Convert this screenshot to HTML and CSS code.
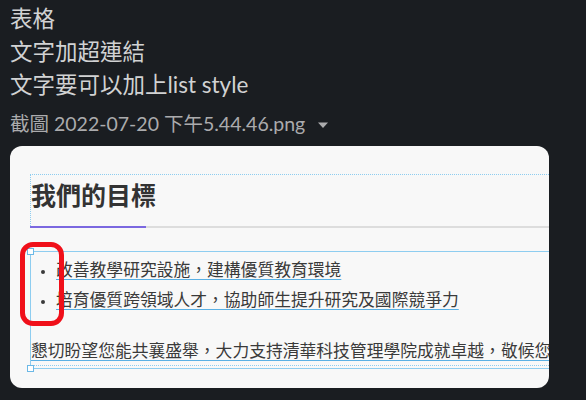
FILE: index.html
```html
<!DOCTYPE html>
<html lang="zh-Hant">
<head>
<meta charset="utf-8">
<link rel="stylesheet" href="styles.css">
</head>
<body>
<div class="msg">
  <p class="line">表格</p>
  <p class="line">文字加超連結</p>
  <p class="line">文字要可以加上list style</p>
  <div class="file">截圖 2022-07-20 下午5.44.46.png<svg class="caret" width="12" height="8" viewBox="0 0 12 8"><path d="M1 1.5h10L6 7z" fill="#ababad"/></svg></div>
  <div class="card">
    <div class="hbox">
      <h2 class="title">我們的目標</h2>
    </div>
    <div class="rule"><span class="rule-accent"></span></div>
    <div class="listbox">
      <span class="handle handle-top"></span>
      <span class="handle handle-bottom"></span>
      <ul class="goals">
        <li><span class="link">改善教學研究設施，建構優質教育環境</span></li>
        <li><span class="link">培育優質跨領域人才，協助師生提升研究及國際競爭力</span></li>
      </ul>
      <p class="para"><span class="link">懇切盼望您能共襄盛舉，大力支持清華科技管理學院成就卓越，敬候您</span></p>
    </div>
    <div class="marker"></div>
  </div>
</div>
</body>
</html>
```

FILE: styles.css
```css
html, body {
  margin: 0;
  padding: 0;
  background: #1a1d21;
}
.msg {
  padding: 2px 10px 0;
  font-family: Lato, "Noto Sans CJK TC", sans-serif;
}
.line {
  margin: 0;
  font-size: 22.5px;
  line-height: 33px;
  color: #d1d2d3;
}
.file {
  margin-top: 11px;
  font-size: 19.5px;
  line-height: 24px;
  color: #ababad;
  display: flex;
  align-items: center;
}
.caret {
  margin-left: 12px;
  margin-top: 2px;
}
.card {
  position: relative;
  margin-top: 10px;
  width: 539px;
  height: 242px;
  box-sizing: border-box;
  background: #f8f8f8;
  border-radius: 12px;
  overflow: hidden;
  padding: 28px 0 0 20px;
  font-family: "Noto Sans CJK TC", sans-serif;
  color: #3a3a3a;
}
.hbox {
  height: 51px;
  border-top: 1px dotted #8ecdf0;
  border-left: 1px dotted #8ecdf0;
}
.title {
  margin: 0;
  padding-top: 3px;
  font-size: 25px;
  line-height: 32px;
  font-weight: 700;
  color: #333;
}
.rule {
  height: 2px;
  background: #dddddd;
  display: flex;
}
.rule-accent {
  width: 116px;
  background: #7b68e0;
}
.listbox {
  position: relative;
  margin-top: 23px;
  height: 116px;
  border-top: 1px solid #8ecdf0;
  border-left: 1px solid #8ecdf0;
  border-bottom: 1px solid #8ecdf0;
  font-size: 16.8px;
}
.handle {
  position: absolute;
  left: -4px;
  width: 5px;
  height: 5px;
  background: #fff;
  border: 1px solid #6bb8e6;
}
.handle-top { top: -4px; }
.handle-bottom { bottom: -4px; }
.goals {
  margin: 0;
  padding: 2px 0 0 25px;
  list-style: disc;
  line-height: 30px;
}
.goals li::marker {
  font-size: 11px;
}
.link {
  text-decoration: underline;
  text-decoration-color: #5ab0e4;
  text-decoration-thickness: 1px;
  text-underline-offset: 3px;
  white-space: nowrap;
}
.para {
  margin: 21px 0 0;
  line-height: 30px;
  white-space: nowrap;
  overflow: hidden;
  border-bottom: 1px dotted #8ecdf0;
}
.marker {
  position: absolute;
  left: 10px;
  top: 96px;
  width: 44px;
  height: 84px;
  box-sizing: border-box;
  border: 5px solid #f0101a;
  border-radius: 13px;
}
```
